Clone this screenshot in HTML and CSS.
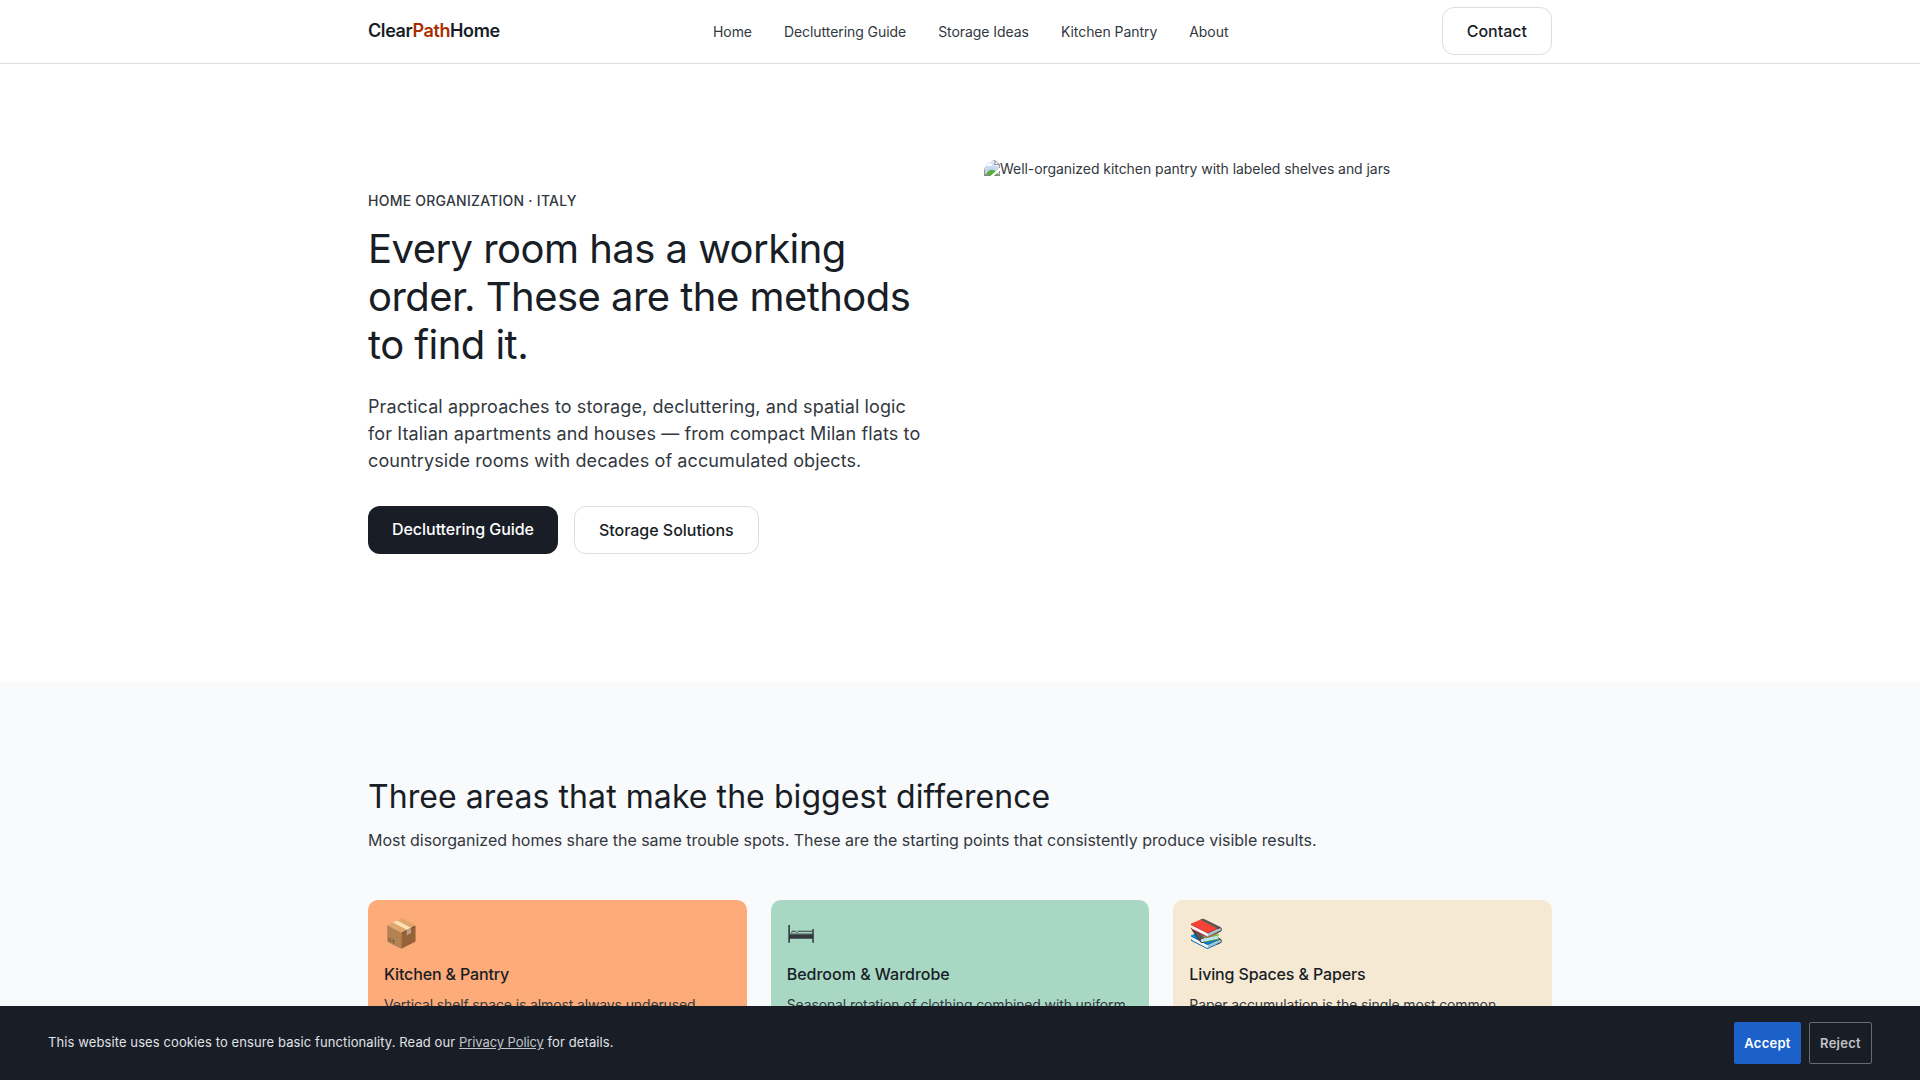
FILE: index.html
```html
<!DOCTYPE html>
<html lang="en">
<head>
<meta charset="utf-8">
<title>ClearPathHome</title>
<link rel="stylesheet" href="styles.css">
</head>
<body>
<header class="site-header">
  <div class="container header-inner">
    <a class="logo">Clear<span>Path</span>Home</a>
    <nav class="nav"><a>Home</a><a>Decluttering Guide</a><a>Storage Ideas</a><a>Kitchen Pantry</a><a>About</a></nav>
    <a class="btn btn-outline contact">Contact</a>
  </div>
</header>
<main>
  <section class="hero">
    <div class="container hero-grid">
      <div class="hero-copy">
        <p class="eyebrow">Home Organization · Italy</p>
        <h1>Every room has a working order. These are the methods to find it.</h1>
        <p class="lead">Practical approaches to storage, decluttering, and spatial logic for Italian apartments and houses — from compact Milan flats to countryside rooms with decades of accumulated objects.</p>
        <div class="actions"><a class="btn btn-dark">Decluttering Guide</a><a class="btn btn-outline">Storage Solutions</a></div>
      </div>
      <img class="hero-image" src="pantry.jpg" alt="Well-organized kitchen pantry with labeled shelves and jars">
    </div>
  </section>
  <section class="areas">
    <div class="container">
      <h2>Three areas that make the biggest difference</h2>
      <p class="intro">Most disorganized homes share the same trouble spots. These are the starting points that consistently produce visible results.</p>
      <div class="cards">
        <article class="card peach"><div class="icon">📦</div><h3>Kitchen &amp; Pantry</h3><p>Vertical shelf space is almost always underused.</p></article>
        <article class="card mint"><div class="icon"><svg class="bed" viewBox="0 0 28 35" width="28" height="35"><path fill="currentColor" d="M1.300 9h1.600v9.300h22.400V13h1.500v13.700h-1.500v-4H2.900v4H1.300z"/><path fill="currentColor" d="M5 14.700h3.800v1H5zM10.700 14.700h14.600v1H10.700zM4.200 15.700h1v1.300h-1zM9.300 15.700h1v1.300h-1z"/><path fill="currentColor" opacity=".6" d="M2.900 17.300h22.400v1H2.900z"/></svg></div><h3>Bedroom &amp; Wardrobe</h3><p>Seasonal rotation of clothing combined with uniform</p></article>
        <article class="card cream"><div class="icon">📚</div><h3>Living Spaces &amp; Papers</h3><p>Paper accumulation is the single most common</p></article>
      </div>
    </div>
  </section>
</main>
<div class="cookie">
  <p>This website uses cookies to ensure basic functionality. Read our <a>Privacy Policy</a> for details.</p>
  <div class="cookie-actions"><button class="accept">Accept</button><button class="reject">Reject</button></div>
</div>
</body>
</html>
```

FILE: styles.css
```css
* { box-sizing: border-box; margin: 0; padding: 0; }
html { overflow: hidden; }
body { font-family: Inter, sans-serif; font-size: 14px; line-height: 1.25; letter-spacing: -.06px; color: #333840; background: #fff; height: 1080px; overflow: hidden; }
.container { width: 1184px; margin: 0 auto; }
.site-header { height: 64px; border-bottom: 1px solid #dddddd; background: #fff; }
.header-inner { height: 63px; display: flex; align-items: center; justify-content: space-between; }
.logo { font-size: 18px; font-weight: 600; letter-spacing: -.41px; color: #181d26; }
.logo span { color: #aa2d00; }
.nav { display: flex; gap: 32px; }
.btn { display: inline-block; font-size: 16px; font-weight: 500; line-height: 16px; letter-spacing: -.02px; padding: 15px 24px; border-radius: 12px; }
.btn-outline { border: 1px solid #dddddd; color: #181d26; background: #fff; }
.btn-dark { background: #181d26; color: #fff; letter-spacing: -.04px; }
.contact { letter-spacing: 0; margin-bottom: 1px; }
.hero { padding: 96px 0; height: 618px; }
.hero-grid { display: grid; grid-template-columns: 1fr 1fr; gap: 48px; align-items: center; }
.eyebrow { font-weight: 500; text-transform: uppercase; letter-spacing: .24px; margin-bottom: 16px; }
h1 { font-size: 40px; font-weight: 400; line-height: 48px; letter-spacing: -.54px; color: #181d26; margin-bottom: 24px; }
.lead { max-width: 560px; font-size: 18px; line-height: 27px; letter-spacing: .11px; margin-bottom: 32px; }
.actions { display: flex; gap: 16px; }
.hero-image { width: 100%; height: 426px; border-radius: 12px; }
.areas { background: #f8fafc; padding: 96px 0 0; height: 398px; overflow: hidden; }
h2 { font-size: 32px; font-weight: 400; line-height: 38px; letter-spacing: .07px; color: #181d26; margin-bottom: 12px; }
.intro { font-size: 16px; line-height: 24px; letter-spacing: -.035px; margin-bottom: 48px; }
.cards { display: grid; grid-template-columns: repeat(3, 1fr); gap: 24px; }
.card { border-radius: 10px; padding: 16px; height: 180px; }
.card p { line-height: 21px; letter-spacing: -.125px; }
.peach { background: #fcab79; }
.mint { background: #a8d8c4; }
.cream { background: #f5e9d4; }
.icon { height: 35px; font-size: 28px; line-height: 35px; letter-spacing: 0; margin-bottom: 12px; }
.bed { display: block; }
h3 { font-size: 16px; font-weight: 500; line-height: 22px; letter-spacing: -.14px; color: #181d26; margin-bottom: 9px; }
.mint h3 { letter-spacing: 0; }
.cookie { position: fixed; left: 0; right: 0; bottom: 0; height: 74px; padding: 0 48px; display: flex; align-items: center; justify-content: space-between; background: #181d26; color: #e0e2e6; font-size: 13px; letter-spacing: .1px; }
.cookie p { padding-bottom: 1px; }
.cookie a { text-decoration: underline; color: #c4c6ca; letter-spacing: -.09px; }
.cookie-actions { display: flex; gap: 8px; }
.cookie button { width: 67px; height: 42px; font: 600 13px/20px Inter, sans-serif; letter-spacing: .25px; border-radius: 2px; border: 1px solid #1b61c9; background: #1b61c9; color: #fff; }
.cookie .reject { width: 63px; background: transparent; border-color: #666a72; color: #c0c2c5; }
```
